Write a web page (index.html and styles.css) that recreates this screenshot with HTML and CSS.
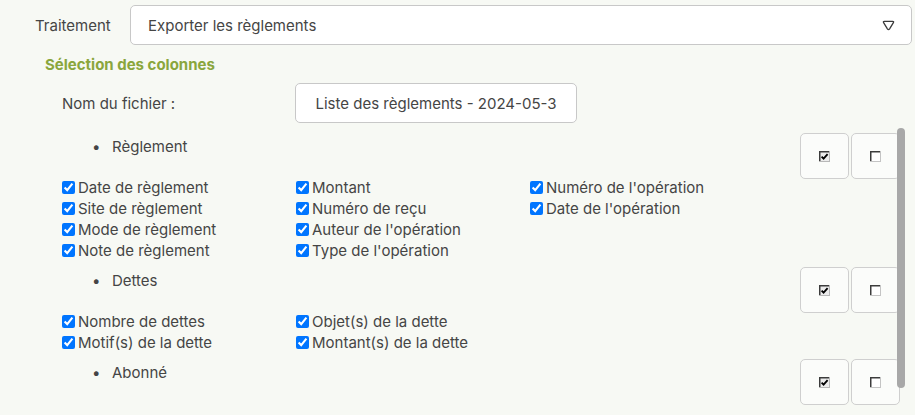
FILE: index.html
```html
<!DOCTYPE html>
<html lang="fr">
<head>
    <meta charset="UTF-8">
    <meta name="viewport" content="width=device-width, initial-scale=1.0">
    <title>Export des règlements</title>
    <link rel="stylesheet" href="styles.css">
</head>
<body>
    <div class="page">
        <div class="field-row">
            <label class="field-label">Traitement</label>
            <div class="select-box">
                <span>Exporter les règlements</span>
                <svg class="select-arrow" width="13" height="11" viewBox="0 0 13 11">
                    <path d="M2.4 1.3 H10.6 Q12.1 1.3 11.4 2.7 L7.6 8.8 Q6.5 10.3 5.4 8.8 L1.6 2.7 Q0.9 1.3 2.4 1.3 Z" fill="none" stroke="#3a3a3a" stroke-width="1.3" stroke-linejoin="round"/>
                </svg>
            </div>
        </div>

        <h3 class="section-title">Sélection des colonnes</h3>

        <div class="file-row">
            <label class="file-label">Nom du fichier :</label>
            <input type="text" class="file-input" value="Liste des règlements - 2024-05-3">
        </div>

        <div class="panel-wrap">
            <div class="columns-panel">
                <!-- Règlement -->
                <div class="group">
                    <div class="group-head">
                        <ul class="group-name"><li>Règlement</li></ul>
                        <div class="toggle-buttons">
                            <button class="toggle-btn" title="Tout cocher">
                                <svg width="11" height="11" viewBox="0 0 11 11"><rect x="0" y="0" width="11" height="11" fill="#b8b8b8"/><rect x="0" y="0" width="10" height="10" fill="#3c3c3c"/><rect x="1.5" y="1.5" width="8.5" height="8.5" fill="#ececec"/><path d="M2.6 5.6 L4.6 7.7 L8.6 3.2" fill="none" stroke="#000" stroke-width="1.8"/></svg>
                            </button>
                            <button class="toggle-btn" title="Tout décocher">
                                <svg width="11" height="11" viewBox="0 0 11 11"><rect x="0" y="0" width="11" height="11" fill="#c4c4c4"/><rect x="0" y="0" width="10" height="10" fill="#3c3c3c"/><rect x="1.5" y="1.5" width="8.5" height="8.5" fill="#fff"/></svg>
                            </button>
                        </div>
                    </div>
                    <div class="check-grid rows-4">
                        <label><input type="checkbox" checked>Date de règlement</label>
                        <label><input type="checkbox" checked>Site de règlement</label>
                        <label><input type="checkbox" checked>Mode de règlement</label>
                        <label><input type="checkbox" checked>Note de règlement</label>
                        <label><input type="checkbox" checked>Montant</label>
                        <label><input type="checkbox" checked>Numéro de reçu</label>
                        <label><input type="checkbox" checked>Auteur de l'opération</label>
                        <label><input type="checkbox" checked>Type de l'opération</label>
                        <label><input type="checkbox" checked>Numéro de l'opération</label>
                        <label><input type="checkbox" checked>Date de l'opération</label>
                    </div>
                </div>

                <!-- Dettes -->
                <div class="group">
                    <div class="group-head">
                        <ul class="group-name"><li>Dettes</li></ul>
                        <div class="toggle-buttons">
                            <button class="toggle-btn" title="Tout cocher">
                                <svg width="11" height="11" viewBox="0 0 11 11"><rect x="0" y="0" width="11" height="11" fill="#b8b8b8"/><rect x="0" y="0" width="10" height="10" fill="#3c3c3c"/><rect x="1.5" y="1.5" width="8.5" height="8.5" fill="#ececec"/><path d="M2.6 5.6 L4.6 7.7 L8.6 3.2" fill="none" stroke="#000" stroke-width="1.8"/></svg>
                            </button>
                            <button class="toggle-btn" title="Tout décocher">
                                <svg width="11" height="11" viewBox="0 0 11 11"><rect x="0" y="0" width="11" height="11" fill="#c4c4c4"/><rect x="0" y="0" width="10" height="10" fill="#3c3c3c"/><rect x="1.5" y="1.5" width="8.5" height="8.5" fill="#fff"/></svg>
                            </button>
                        </div>
                    </div>
                    <div class="check-grid rows-2">
                        <label><input type="checkbox" checked>Nombre de dettes</label>
                        <label><input type="checkbox" checked>Motif(s) de la dette</label>
                        <label><input type="checkbox" checked>Objet(s) de la dette</label>
                        <label><input type="checkbox" checked>Montant(s) de la dette</label>
                    </div>
                </div>

                <!-- Abonné -->
                <div class="group">
                    <div class="group-head">
                        <ul class="group-name"><li>Abonné</li></ul>
                        <div class="toggle-buttons">
                            <button class="toggle-btn" title="Tout cocher">
                                <svg width="11" height="11" viewBox="0 0 11 11"><rect x="0" y="0" width="11" height="11" fill="#b8b8b8"/><rect x="0" y="0" width="10" height="10" fill="#3c3c3c"/><rect x="1.5" y="1.5" width="8.5" height="8.5" fill="#ececec"/><path d="M2.6 5.6 L4.6 7.7 L8.6 3.2" fill="none" stroke="#000" stroke-width="1.8"/></svg>
                            </button>
                            <button class="toggle-btn" title="Tout décocher">
                                <svg width="11" height="11" viewBox="0 0 11 11"><rect x="0" y="0" width="11" height="11" fill="#c4c4c4"/><rect x="0" y="0" width="10" height="10" fill="#3c3c3c"/><rect x="1.5" y="1.5" width="8.5" height="8.5" fill="#fff"/></svg>
                            </button>
                        </div>
                    </div>
                    <div class="check-grid rows-2">
                        <label><input type="checkbox" checked>Numéro d'abonné</label>
                        <label><input type="checkbox" checked>Nom de l'abonné</label>
                        <label><input type="checkbox" checked>Prénom de l'abonné</label>
                        <label><input type="checkbox" checked>Adresse de l'abonné</label>
                    </div>
                </div>
            </div>
            <!-- scrollbar thumb drawn over the panel's right edge -->
            <div class="scroll-thumb"></div>
        </div>
    </div>
</body>
</html>
```

FILE: styles.css
```css
body {
    margin: 0;
    padding: 0;
    background-color: #f7f9f4;
    font-family: Inter, "Noto Sans", sans-serif;
    font-size: 15px;
    color: #454545;
    overflow: hidden;
}

.page {
    padding: 5px 3px 0 35px;
}

/* Traitement select */
.field-row {
    display: flex;
    align-items: center;
}

.field-label {
    width: 95px;
}

.select-box {
    flex: 1;
    height: 40px;
    box-sizing: border-box;
    display: flex;
    align-items: center;
    justify-content: space-between;
    padding: 0 16px 0 17px;
    background-color: #fff;
    border: 1px solid #c8c8c8;
    border-radius: 5px;
}

.select-arrow {
    margin-top: 1px;
}

.section-title {
    margin: 10px 0 0 10px;
    line-height: 20px;
    font-size: 15px;
    font-weight: 700;
    color: #8aa63d;
}

/* Nom du fichier */
.file-row {
    display: flex;
    align-items: center;
    margin-top: 8px;
    padding-left: 27px;
}

.file-label {
    width: 233px;
}

.file-input {
    width: 282px;
    height: 40px;
    box-sizing: border-box;
    border: 1px solid #c8c8c8;
    border-radius: 5px;
    background-color: #fff;
    font-family: inherit;
    font-size: 15px;
    color: #454545;
    text-align: center;
    padding: 0 10px;
}

/* Column selection list */
.panel-wrap {
    position: relative;
    margin: 4px 7px 0 0;
}

.columns-panel {
    height: 279px;
    overflow-y: auto;
    overflow-x: hidden;
    scrollbar-width: none;
}

.columns-panel::-webkit-scrollbar {
    display: none;
}

.scroll-thumb {
    position: absolute;
    top: 1px;
    right: 0;
    width: 8px;
    height: 260px;
    background-color: #a8a8a8;
    border-radius: 4px;
}

.group {
    padding-top: 6px;
}

.group-head {
    display: flex;
    align-items: flex-start;
}

.group-name {
    margin: 3px 0 0 0;
    padding-left: 57px;
    list-style: none;
    line-height: 21px;
}

.group-name li::before {
    content: "\2022";
    display: inline-block;
    width: 20px;
}

.toggle-buttons {
    display: flex;
    gap: 2px;
    margin-left: auto;
    margin-right: 5px;
}

.toggle-btn {
    width: 49px;
    height: 46px;
    display: flex;
    align-items: center;
    justify-content: center;
    padding: 0;
    background-color: #fbfcfa;
    border: 1px solid #cfcfcf;
    border-radius: 5px;
    cursor: pointer;
}

.check-grid {
    display: grid;
    grid-auto-flow: column;
    grid-template-columns: repeat(3, 234px);
    margin-top: -2px;
    padding-left: 23px;
}

.check-grid.rows-4 {
    grid-template-rows: repeat(4, 21px);
}

.check-grid.rows-2 {
    grid-template-rows: repeat(2, 21px);
}

.check-grid label {
    display: flex;
    align-items: center;
    line-height: 21px;
    white-space: nowrap;
}

.check-grid input {
    margin: 0 3px 0 4px;
    width: 13px;
    height: 13px;
}
```
